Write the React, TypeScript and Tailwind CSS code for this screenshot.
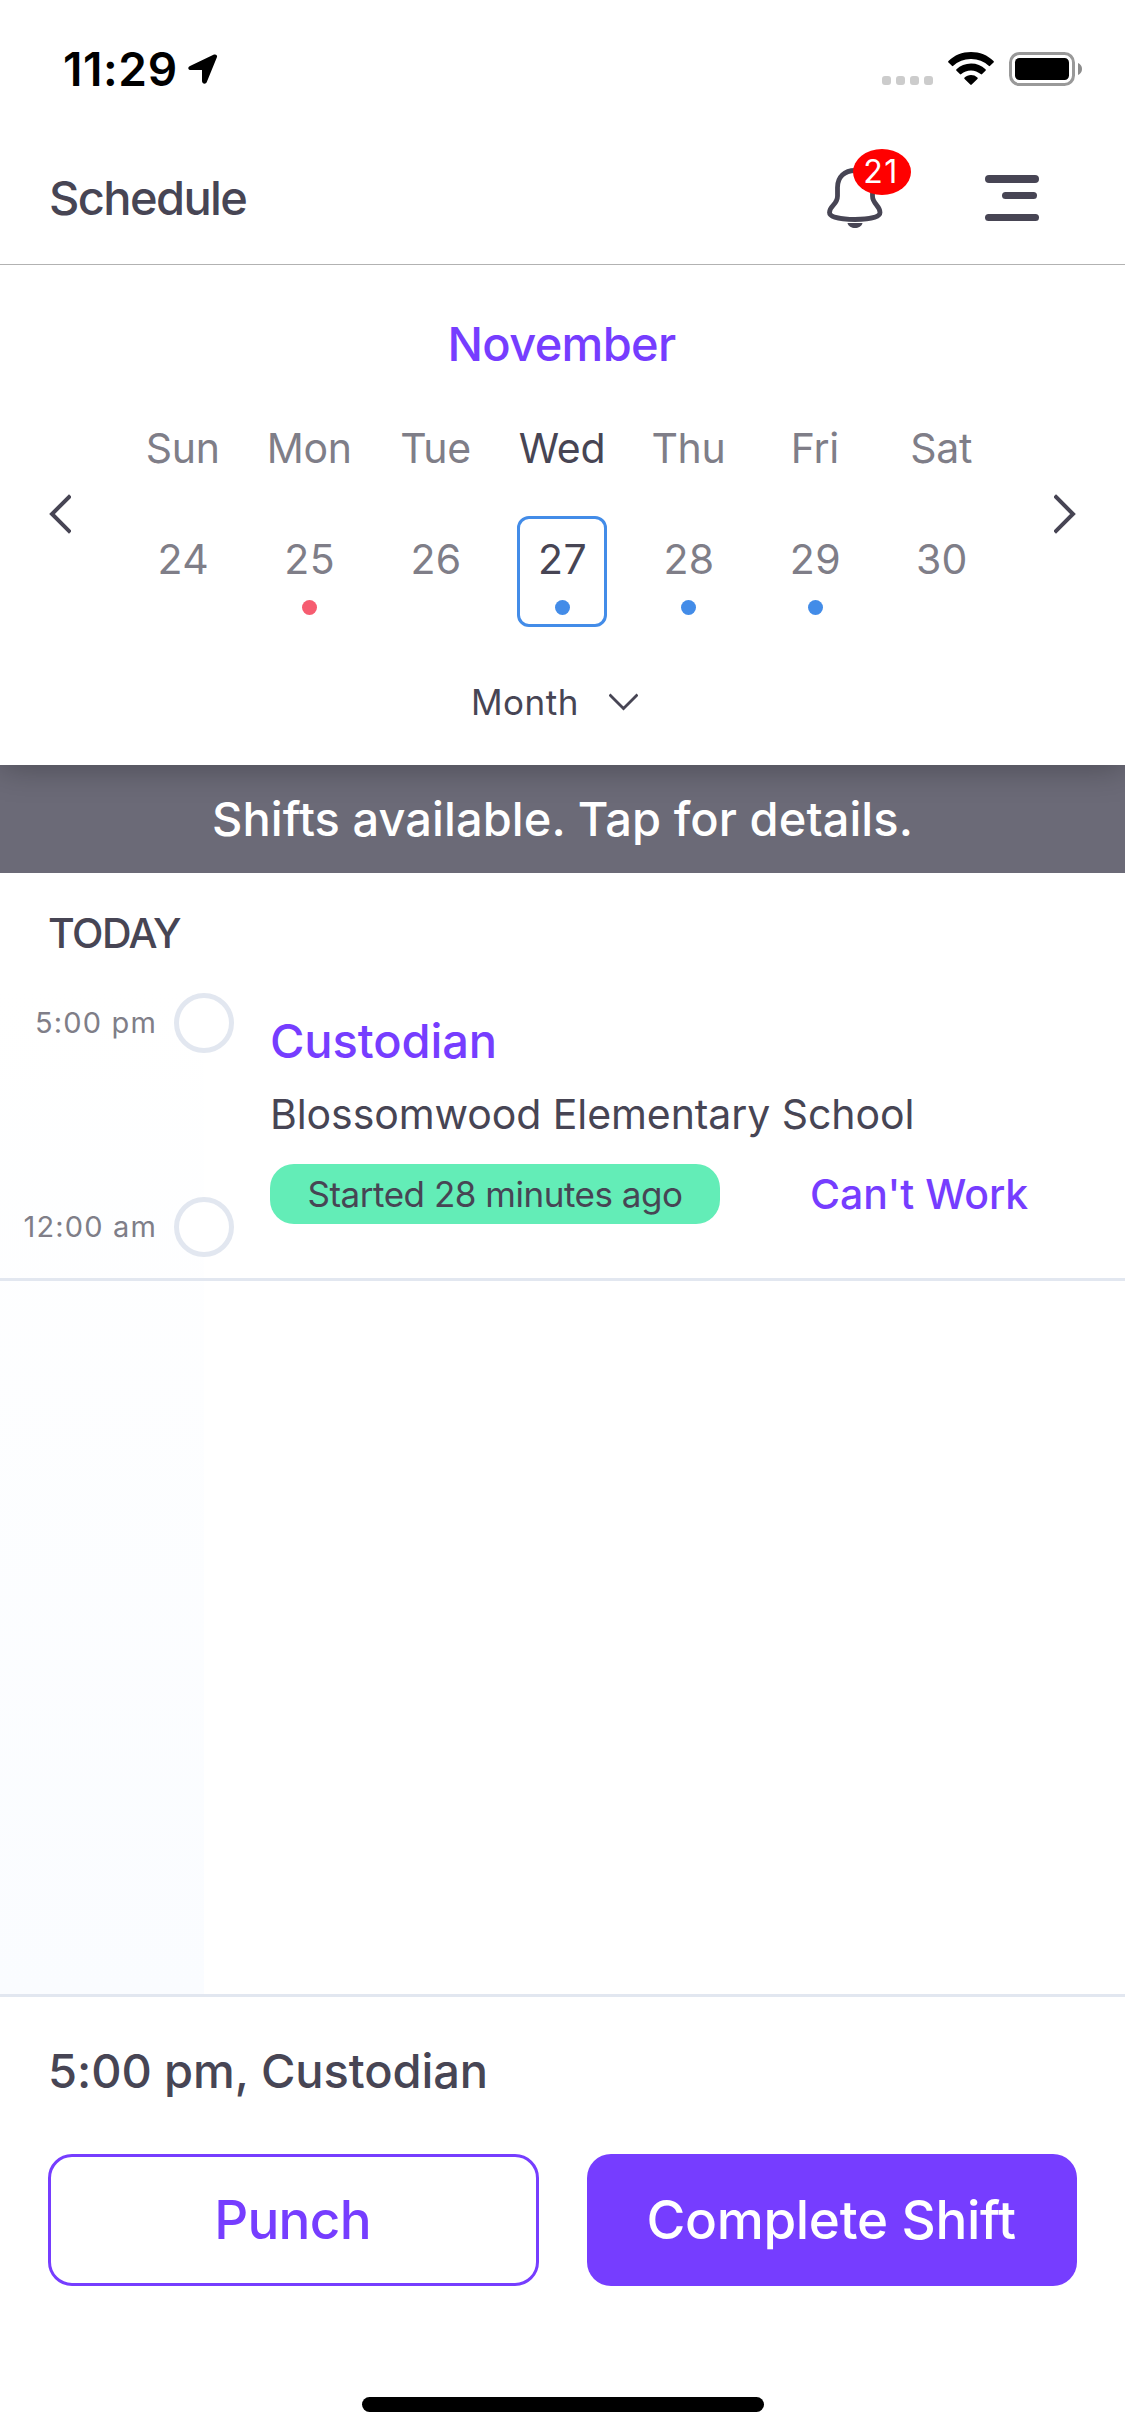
type Day = { name: string; date: string; dot?: "red" | "blue"; selected?: boolean };

const days: Day[] = [
  { name: "Sun", date: "24" },
  { name: "Mon", date: "25", dot: "red" },
  { name: "Tue", date: "26" },
  { name: "Wed", date: "27", dot: "blue", selected: true },
  { name: "Thu", date: "28", dot: "blue" },
  { name: "Fri", date: "29", dot: "blue" },
  { name: "Sat", date: "30" },
];

function StatusBar() {
  return (
    <div className="flex h-[132px] items-start pt-11 pl-[63px] pr-[43px] text-black">
      <div className="flex h-[50px] w-[125px] items-center text-[46px] font-semibold leading-[50px] tracking-[0.6px]">11:29</div>
      <svg className="mt-[10px] h-[30px] w-[30px]" viewBox="0 0 30 30" fill="currentColor">
        <path d="M2 12 26 .6c2-.8 3.6.7 2.900 2.700L18.800 28c-.9 2.600-4.800 2-4.800-.9V16H2.900C-.1 16-.6 13.200 2 12Z" />
      </svg>
      <div className="ml-auto flex pt-2">
        <div className="mt-6 mr-[15px] flex gap-[5px]">
          {[0, 1, 2, 3].map((i) => (
            <span key={i} className="h-[9px] w-[9px] rounded-[3px] bg-[#cccccc]" />
          ))}
        </div>
        <svg className="h-[34px] w-[46px]" viewBox="0 0 46 34" fill="currentColor">
          <path d="M23 0C14.300 0 6.300 3.300.5 8.900a1 1 0 0 0 0 1.500l3.400 3.400a1 1 0 0 0 1.400 0A25.500 25.500 0 0 1 23 7a25.500 25.500 0 0 1 17.700 6.800 1 1 0 0 0 1.400 0l3.400-3.400a1 1 0 0 0 0-1.500C39.700 3.300 31.700 0 23 0Z" />
          <path d="M23 11.500c-5.600 0-10.700 2.100-14.500 5.700a1 1 0 0 0 0 1.500l3.400 3.400a1 1 0 0 0 1.400 0A14.200 14.200 0 0 1 23 18.400c3.700 0 7.100 1.400 9.700 3.700a1 1 0 0 0 1.400 0l3.400-3.400a1 1 0 0 0 0-1.500A21 21 0 0 0 23 11.500Z" />
          <path d="M23 23c-2.500 0-4.700.9-6.400 2.400a1 1 0 0 0 0 1.500l5.700 5.700a1 1 0 0 0 1.400 0l5.700-5.700a1 1 0 0 0 0-1.500A9.700 9.700 0 0 0 23 23Z" />
        </svg>
        <svg className="ml-[15px] h-[34px] w-[73px]" viewBox="0 0 73 34">
          <rect x="1.500" y="1.500" width="63" height="31" rx="9" fill="none" stroke="#999999" strokeWidth="3" />
          <rect x="6" y="6" width="54" height="22" rx="4.500" fill="#000000" />
          <path d="M69 11c2.600 1 4 3.400 4 6s-1.400 5-4 6Z" fill="#8c8c8c" />
        </svg>
      </div>
    </div>
  );
}

function Header() {
  return (
    <header className="flex h-[133px] items-start border-b border-[#b2b2b2] pr-[86px] pl-[49px] text-[#474554]">
      <h1 className="h-[131px] flex-1 text-[47px] font-medium leading-[131px] tracking-[-1.6px]">Schedule</h1>
      <div className="relative mt-[33px] mr-[102px] h-[64px] w-[56px]">
        <svg className="h-[64px] w-[56px]" viewBox="0 0 56 64" fill="none">
          <path
            d="M28 5.500C17.500 5.500 10.500 12 10.500 22.500V31C10.500 40 2.500 40.500 2.500 47.500C2.500 52 13.500 54.500 28 54.500S53 52 53 47.500C53 40.500 45.500 39 45.500 31V22.500C45.500 12 38.500 5.500 28 5.500Z"
            stroke="#474554"
            strokeWidth="4.800"
          />
          <path d="M20.500 58h15c-.8 3.200-4 5-7.500 5s-6.700-1.800-7.500-5Z" fill="#474554" />
        </svg>
        <span className="absolute -top-4 left-[26px] flex h-[46px] w-[58px] items-center justify-center rounded-[50%] bg-[#ff0000] pr-0.5 text-[32px] leading-none tracking-[1.500px] text-white">
          21
        </span>
      </div>
      <div className="mt-[43px] flex h-[46px] w-[54px] flex-col items-end justify-between">
        <span className="h-[7.500px] w-[54px] rounded-full bg-[#474554]" />
        <span className="mr-[2px] mb-[5px] h-[7.500px] w-[35px] rounded-full bg-[#474554]" />
        <span className="h-[7.500px] w-[54px] rounded-full bg-[#474554]" />
      </div>
    </header>
  );
}

function Chevron({ d, className, viewBox, stroke = 4 }: { d: string; className: string; viewBox: string; stroke?: number }) {
  return (
    <svg className={className} viewBox={viewBox} fill="none" stroke="#474554" strokeWidth={stroke} strokeLinecap="square">
      <path d={d} />
    </svg>
  );
}

function Calendar() {
  return (
    <section className="relative z-10 h-[500px] bg-white pt-[54px] shadow-[0_2px_32px_rgba(0,0,0,0.3)] [clip-path:inset(0_0_-60px_0)]">
      <h2 className="pr-0.5 text-center text-[47px] font-medium leading-[50px] tracking-[-0.65px] text-[#763dff]">November</h2>
      <div className="mt-[54px] flex justify-between px-[49px]">
        <Chevron className="mt-[71px] h-10 w-[22px]" viewBox="0 0 22 40" d="M20 3 3 20 20 37" />
        <div className="grid w-[885px] grid-cols-7">
          {days.map((day) => (
            <div key={day.name} className={day.selected ? "flex flex-col items-center text-[#474554]" : "flex flex-col items-center text-[#7f7e88]"}>
              <span className="pr-px text-[41px] leading-[50px] tracking-[-0.3px]">{day.name}</span>
              <div
                className={
                  day.selected
                    ? "mt-[43px] flex h-[111px] w-[90px] flex-col items-center rounded-[12px] border-[3px] border-[#438ce8] pt-[15px]"
                    : "mt-[43px] flex h-[111px] w-[90px] flex-col items-center pt-[18px]"
                }
              >
                <span className="text-[41px] leading-[50px] tracking-[0.3px]">{day.date}</span>
                {day.dot === "red" && <span className="mt-4 h-[15px] w-[15px] rounded-full bg-[#f65c70]" />}
                {day.dot === "blue" && <span className="mt-4 h-[15px] w-[15px] rounded-full bg-[#438ce8]" />}
              </div>
            </div>
          ))}
        </div>
        <Chevron className="mt-[71px] h-10 w-[22px]" viewBox="0 0 22 40" d="M2 3 19 20 2 37" />
      </div>
      <div className="mt-[50px] flex items-center pl-[471px]">
        <span className="w-[138px] text-[35px] leading-[50px] tracking-[0.5px] text-[#474554]">Month</span>
        <Chevron className="h-[18px] w-[29px]" viewBox="0 0 29 18" d="M1.500 2.500 14.500 15.500 27.500 2.500" stroke={2.800} />
      </div>
    </section>
  );
}

function ShiftRow() {
  return (
    <article className="flex h-[317px] border-b-[3px] border-[#e2e7f0]">
      <div className="flex w-[234px] flex-col justify-between pt-[29px] pb-[21px] text-[29px] text-[#7f7e88]">
        <div className="flex items-center justify-end gap-[17px] leading-[60px] tracking-[1.150px]">
          5:00 pm
          <span className="h-[60px] w-[60px] rounded-full border-[5px] border-[#e2e7f0] bg-white" />
        </div>
        <div className="flex items-center justify-end gap-[17px] leading-[60px] tracking-[1.150px]">
          12:00 am
          <span className="h-[60px] w-[60px] rounded-full border-[5px] border-[#e2e7f0] bg-white" />
        </div>
      </div>
      <div className="flex-1 pt-[47px] pl-9 text-[#474554]">
        <h3 className="text-[47px] font-medium leading-[60px] tracking-[-0.1px] text-[#763dff]">Custodian</h3>
        <p className="mt-[18px] text-[41px] leading-[50px] tracking-[-0.080px]">Blossomwood Elementary School</p>
        <div className="mt-[25px] flex items-center">
          <span className="h-[60px] w-[450px] rounded-[24px] bg-[#63edb7] text-center text-[35px] leading-[61px] tracking-[-0.480px]">
            Started 28 minutes ago
          </span>
          <button className="ml-[90px] h-[60px] text-[41px] font-medium leading-[58px] tracking-[-0.050px] text-[#763dff]">Can't Work</button>
        </div>
      </div>
    </article>
  );
}

export default function App() {
  return (
    <div className="flex h-[2436px] w-[1125px] flex-col overflow-hidden bg-white font-['Inter',sans-serif]">
      <StatusBar />
      <Header />
      <Calendar />
      <div className="h-[108px] bg-[#6b6a77] text-center text-[47px] font-medium leading-[108px] tracking-[0.070px] text-white">
        Shifts available. Tap for details.
      </div>
      <main className="h-[1121px] bg-[linear-gradient(to_bottom,#ffffff_10%,#fafcff)] bg-[length:204px_100%] bg-no-repeat">
        <h2 className="h-[91px] pt-[35px] pl-12 text-[41px] font-medium leading-[50px] tracking-[-1.5px] text-[#474554]">TODAY</h2>
        <ShiftRow />
      </main>
      <footer className="flex flex-1 flex-col border-t-[3px] border-[#e2e7f0] px-12 pt-11">
        <p className="text-[47px] font-medium leading-[60px] tracking-[-0.080px] text-[#474554]">5:00 pm, Custodian</p>
        <div className="mt-[53px] flex justify-between text-center text-[53px] font-medium">
          <button className="h-[132px] w-[491px] rounded-[24px] border-[3px] border-[#763dff] pr-0.5 leading-[126px] tracking-[-0.7px] text-[#763dff]">
            Punch
          </button>
          <button className="h-[132px] w-[490px] rounded-[24px] bg-[#763dff] pr-0.5 leading-[132px] tracking-[-0.320px] text-white">
            Complete Shift
          </button>
        </div>
        <div className="mx-auto mt-[111px] h-[15px] w-[402px] rounded-full bg-black" />
      </footer>
    </div>
  );
}
